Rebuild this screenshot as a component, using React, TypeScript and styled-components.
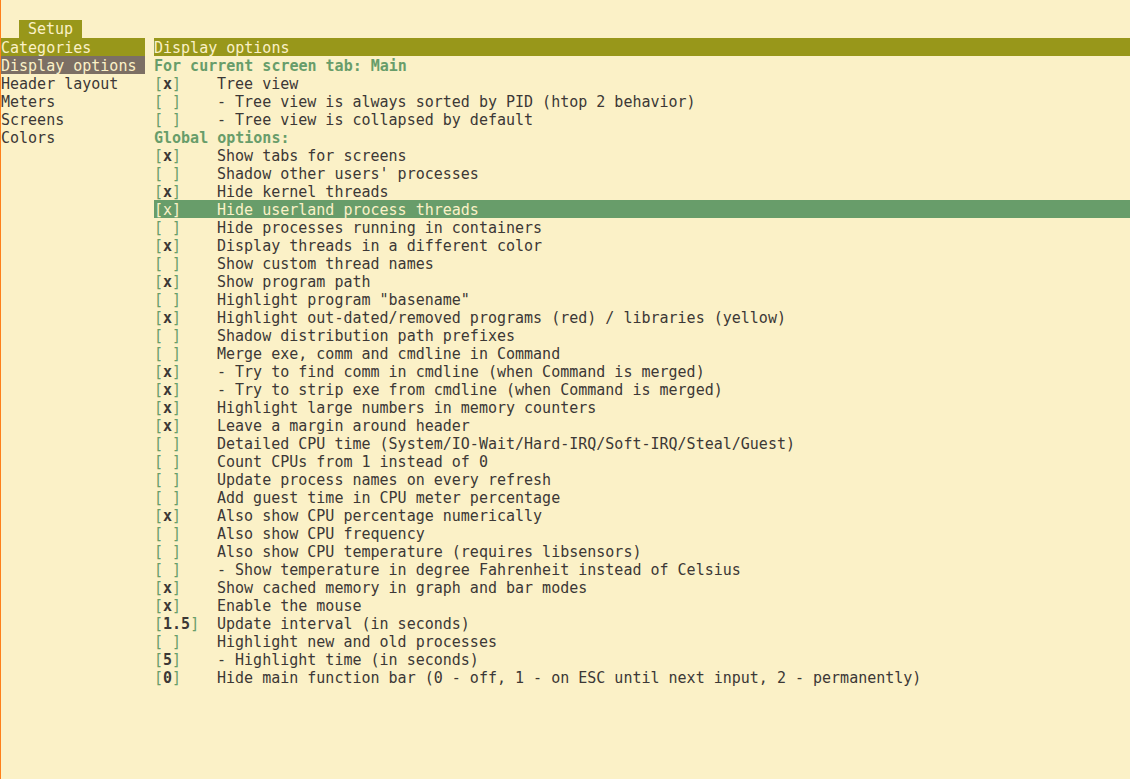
import React from "react";
import styled, { createGlobalStyle } from "styled-components";

const BG = "#fbf1c7";
const OLIVE = "#98971a";
const GREY = "#7c6f64";
const GREEN = "#689d6a";
const INK = "#3c3836";

const GlobalStyle = createGlobalStyle`
  html, body {
    margin: 0;
    padding: 0;
    background: ${BG};
  }
  body {
    font-family: "DejaVu Sans Mono", "Liberation Mono", monospace;
    font-size: 15px;
    color: ${INK};
  }
`;

const Screen = styled.div`
  min-height: 100vh;
  box-sizing: border-box;
  border-left: 1px solid #fe8019;
  padding-top: 2px;
  white-space: pre;
  overflow: hidden;
`;

// one terminal cell row: 18px tall, glyphs sit 1px low like the terminal
const Line = styled.div`
  height: 18px;
  box-sizing: border-box;
  padding-top: 1px;
  line-height: 18px;
`;

const TabStrip = styled(Line)`
  margin-top: 18px;
  padding-left: 18px;
  padding-top: 0;
`;

const Tab = styled.span`
  display: inline-block;
  height: 18px;
  box-sizing: border-box;
  padding: 1px 9px 0;
  line-height: 17px;
  background: ${OLIVE};
  color: ${BG};
`;

const Body = styled.div`
  display: flex;
  gap: 9px;
`;

const Sidebar = styled.div`
  width: 144px;
  flex: none;
`;

const Main = styled.div`
  flex: 1;
`;

const Heading = styled(Line)`
  background: ${OLIVE};
  color: ${BG};
`;

const SideItem = styled(Line)<{ $active?: boolean }>`
  background: ${({ $active }) => ($active ? GREY : "transparent")};
  color: ${({ $active }) => ($active ? BG : INK)};
`;

const Group = styled(Line)`
  color: ${GREEN};
  font-weight: bold;
`;

const OptionRow = styled(Line)<{ $selected?: boolean }>`
  display: grid;
  grid-template-columns: 63px 1fr;
  background: ${({ $selected }) => ($selected ? GREEN : "transparent")};
  color: ${({ $selected }) => ($selected ? BG : INK)};
`;

const Bracket = styled.span<{ $selected?: boolean }>`
  color: ${({ $selected }) => ($selected ? BG : GREEN)};
`;

const Value = styled.span<{ $selected?: boolean }>`
  font-weight: ${({ $selected }) => ($selected ? "normal" : "bold")};
`;

type Opt = { v: string; label: string };

const categories = ["Display options", "Header layout", "Meters", "Screens", "Colors"];

const screenOpts: Opt[] = [
  { v: "x", label: "Tree view" },
  { v: " ", label: "- Tree view is always sorted by PID (htop 2 behavior)" },
  { v: " ", label: "- Tree view is collapsed by default" },
];

const globalOpts: Opt[] = [
  { v: "x", label: "Show tabs for screens" },
  { v: " ", label: "Shadow other users' processes" },
  { v: "x", label: "Hide kernel threads" },
  { v: "x", label: "Hide userland process threads" },
  { v: " ", label: "Hide processes running in containers" },
  { v: "x", label: "Display threads in a different color" },
  { v: " ", label: "Show custom thread names" },
  { v: "x", label: "Show program path" },
  { v: " ", label: 'Highlight program "basename"' },
  { v: "x", label: "Highlight out-dated/removed programs (red) / libraries (yellow)" },
  { v: " ", label: "Shadow distribution path prefixes" },
  { v: " ", label: "Merge exe, comm and cmdline in Command" },
  { v: "x", label: "- Try to find comm in cmdline (when Command is merged)" },
  { v: "x", label: "- Try to strip exe from cmdline (when Command is merged)" },
  { v: "x", label: "Highlight large numbers in memory counters" },
  { v: "x", label: "Leave a margin around header" },
  { v: " ", label: "Detailed CPU time (System/IO-Wait/Hard-IRQ/Soft-IRQ/Steal/Guest)" },
  { v: " ", label: "Count CPUs from 1 instead of 0" },
  { v: " ", label: "Update process names on every refresh" },
  { v: " ", label: "Add guest time in CPU meter percentage" },
  { v: "x", label: "Also show CPU percentage numerically" },
  { v: " ", label: "Also show CPU frequency" },
  { v: " ", label: "Also show CPU temperature (requires libsensors)" },
  { v: " ", label: "- Show temperature in degree Fahrenheit instead of Celsius" },
  { v: "x", label: "Show cached memory in graph and bar modes" },
  { v: "x", label: "Enable the mouse" },
  { v: "1.5", label: "Update interval (in seconds)" },
  { v: " ", label: "Highlight new and old processes" },
  { v: "5", label: "- Highlight time (in seconds)" },
  { v: "0", label: "Hide main function bar (0 - off, 1 - on ESC until next input, 2 - permanently)" },
];

const SELECTED = "Hide userland process threads";

function Option({ v, label }: Opt) {
  const sel = label === SELECTED;
  return (
    <OptionRow $selected={sel}>
      <span>
        <Bracket $selected={sel}>[</Bracket>
        <Value $selected={sel}>{v}</Value>
        <Bracket $selected={sel}>]</Bracket>
      </span>
      <span>{label}</span>
    </OptionRow>
  );
}

export default function App() {
  return (
    <>
      <GlobalStyle />
      <Screen>
        <TabStrip>
          <Tab>Setup</Tab>
        </TabStrip>
        <Body>
          <Sidebar>
            <Heading>Categories</Heading>
            {categories.map((c, i) => (
              <SideItem key={c} $active={i === 0}>
                {c}
              </SideItem>
            ))}
          </Sidebar>
          <Main>
            <Heading>Display options</Heading>
            <Group>For current screen tab: Main</Group>
            {screenOpts.map((o) => (
              <Option key={o.label} {...o} />
            ))}
            <Group>Global options:</Group>
            {globalOpts.map((o) => (
              <Option key={o.label} {...o} />
            ))}
          </Main>
        </Body>
      </Screen>
    </>
  );
}
